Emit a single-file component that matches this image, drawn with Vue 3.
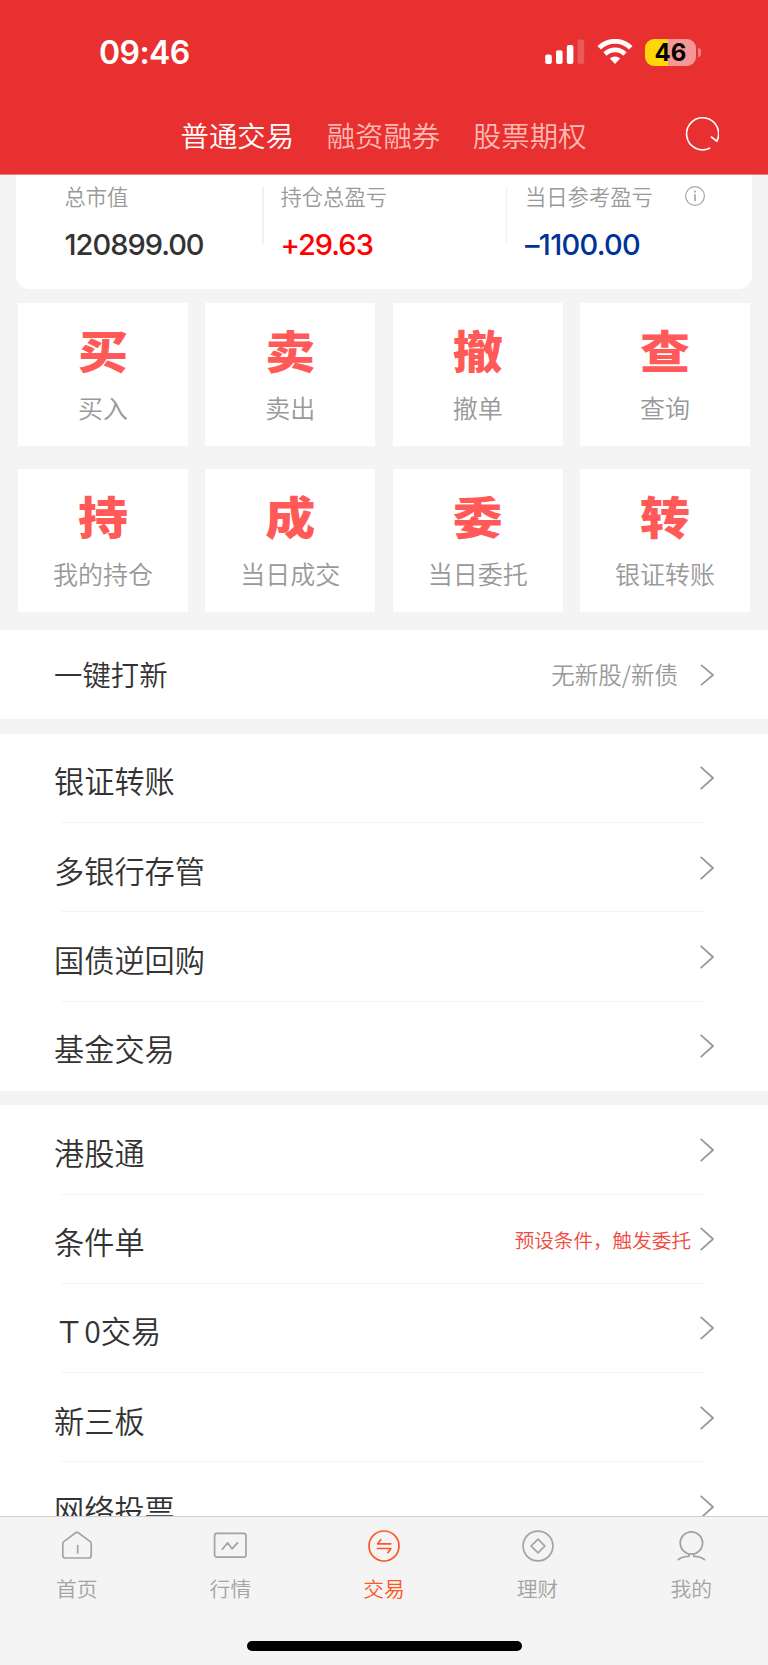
<script setup>
import { ref } from "vue"

const accounts = ["普通交易", "融资融券", "股票期权"]
const activeAccount = ref(0)

const actions = [
    { mark: "买", label: "买入" },
    { mark: "卖", label: "卖出" },
    { mark: "撤", label: "撤单" },
    { mark: "查", label: "查询" },
    { mark: "持", label: "我的持仓" },
    { mark: "成", label: "当日成交" },
    { mark: "委", label: "当日委托" },
    { mark: "转", label: "银证转账" }
]

const groups = [
    [
        { title: "银证转账" },
        { title: "多银行存管" },
        { title: "国债逆回购" },
        { title: "基金交易" }
    ],
    [
        { title: "港股通" },
        { title: "条件单", hint: "预设条件，触发委托" },
        { title: "Ｔ0交易" },
        { title: "新三板" },
        { title: "网络投票" }
    ]
]

const tabs = [
    { id: "home", label: "首页" },
    { id: "market", label: "行情" },
    { id: "trade", label: "交易" },
    { id: "wealth", label: "理财" },
    { id: "mine", label: "我的" }
]
const activeTab = ref("trade")
</script>

<template>
    <div class="page">

        <!-- HEADER -->
        <header class="header">
            <div class="status">
                <span class="time">09:46</span>
                <div class="status-icons">
                    <svg class="signal" width="40" height="26" viewBox="0 0 40 26" fill="#fff">
                        <rect x="0.2" y="15.5" width="6.6" height="9.5" rx="2" />
                        <rect x="11" y="11.2" width="6.6" height="13.8" rx="2" />
                        <rect x="21.8" y="6" width="6.6" height="19" rx="2" />
                        <rect x="32.6" y="0.6" width="6.6" height="24.4" rx="2" opacity=".2" />
                    </svg>
                    <svg class="wifi" width="36" height="26" viewBox="0 0 36 26" fill="none" stroke="#fff">
                        <path d="M2.2 8.8 A22.6 22.6 0 0 1 33.8 8.8" stroke-width="5" />
                        <path d="M8 15 A14.2 14.2 0 0 1 28 15" stroke-width="4.6" />
                        <path d="M12.8 19.6 A7.6 7.6 0 0 1 23.2 19.6 L18 25 Z" fill="#fff" stroke="none" />
                    </svg>
                    <div class="battery"><span>46</span></div>
                    <i class="battery-cap"></i>
                </div>
            </div>
            <nav class="accounts">
                <span v-for="(name, i) in accounts" :key="name" :class="{ active: i === activeAccount }"
                    @click="activeAccount = i">{{ name }}</span>
                <svg class="refresh" width="36" height="36" viewBox="0 0 36 36" fill="none" stroke="#fff"
                    stroke-width="1.6" stroke-linecap="round" stroke-linejoin="round">
                    <path d="M26.6 31.2 A16 16 0 1 1 33.8 24.2" />
                    <path d="M28.4 20 L33.8 24.2" />
                </svg>
            </nav>
        </header>

        <main class="content">

            <!-- ASSETS -->
            <section class="assets">
                <div class="asset">
                    <p>总市值</p>
                    <b>120899.00</b>
                </div>
                <div class="asset">
                    <p>持仓总盈亏</p>
                    <b class="up">+29.63</b>
                </div>
                <div class="asset">
                    <p>
                        当日参考盈亏
                        <svg class="info" width="22" height="22" viewBox="0 0 22 22" fill="none" stroke="#a6a6a6">
                            <circle cx="11" cy="11" r="9.4" stroke-width="1.2" />
                            <path d="M11 9.2V16.2" stroke-width="1.7" />
                            <path d="M11 5.6V7.4" stroke-width="1.7" />
                        </svg>
                    </p>
                    <b class="down">–1100.00</b>
                </div>
            </section>

            <!-- QUICK ACTIONS -->
            <section class="actions">
                <div v-for="item in actions" :key="item.mark" class="action">
                    <span class="mark">{{ item.mark }}</span>
                    <span class="label">{{ item.label }}</span>
                </div>
            </section>

            <!-- NEW SHARES -->
            <section class="group ipo">
                <div class="row">
                    <span class="title">一键打新</span>
                    <span class="note">无新股/新债</span>
                    <svg class="arrow" width="14" height="24" viewBox="0 0 14 24">
                        <path d="M1.6 2.4 L13 12 L1.6 21.6" />
                    </svg>
                </div>
            </section>

            <!-- MENU -->
            <section v-for="(group, g) in groups" :key="g" class="group">
                <div v-for="item in group" :key="item.title" class="row">
                    <span class="title">{{ item.title }}</span>
                    <span v-if="item.hint" class="hint">{{ item.hint }}</span>
                    <svg class="arrow" width="14" height="24" viewBox="0 0 14 24">
                        <path d="M1.2 1.4 L13 12 L1.2 22.6" />
                    </svg>
                </div>
            </section>

        </main>

        <!-- TAB BAR -->
        <footer class="tabbar">
            <div class="tabs">
                <div v-for="tab in tabs" :key="tab.id" class="tab" :class="{ active: tab.id === activeTab }"
                    @click="activeTab = tab.id">
                    <svg width="36" height="36" viewBox="0 0 36 36" fill="none" stroke="currentColor"
                        stroke-width="1.7" stroke-linejoin="round">
                        <template v-if="tab.id === 'home'">
                            <path d="M17 4.5 Q18 3.8 19 4.5 L31.2 13.6 Q32.2 14.4 32.2 15.6 V27.4 Q32.2 30 29.6 30 H6.4 Q3.8 30 3.8 27.4 V15.6 Q3.8 14.4 4.8 13.6 Z" />
                            <path d="M18.7 16.8V25.6" />
                        </template>
                        <template v-else-if="tab.id === 'market'">
                            <rect x="2.6" y="5.4" width="31.4" height="23.8" rx="2.4" />
                            <path d="M10 21.8 L15.6 14.8 L20 20.8 L26 14.4" />
                        </template>
                        <template v-else-if="tab.id === 'trade'">
                            <circle cx="18" cy="18" r="15" />
                            <path d="M25.4 15.8H11.6L15.2 11.2" />
                            <path d="M10.8 20.5H24.8L21.6 25.2" />
                        </template>
                        <template v-else-if="tab.id === 'wealth'">
                            <circle cx="18" cy="18" r="14.9" />
                            <path d="M18 11.2 L24.8 18 L18 24.8 L11.2 18 Z" stroke-linejoin="miter" />
                        </template>
                        <template v-else>
                            <circle cx="18.4" cy="15" r="11.2" />
                            <path d="M4.8 32 Q8.8 28.4 16 28.4 V26" />
                            <path d="M32 32 Q28 28.4 20.8 28.4 V26" />
                        </template>
                    </svg>
                    <span>{{ tab.label }}</span>
                </div>
            </div>
            <div class="home-bar"></div>
        </footer>

    </div>
</template>

<style>
body {
    margin: 0;
    background: #f4f4f4;
}
</style>

<style scoped>
.page {
    display: flex;
    flex-direction: column;
    width: 768px;
    height: 1665px;
    overflow: hidden;
    background: #f4f4f4;
    color: #333;
    font-family: "Noto Sans CJK SC", sans-serif;
    font-weight: 350;
}

.header {
    flex: none;
    height: 174px;
    background: #e93030;
    border-bottom: 1px solid #f08080;
    color: #fff;
}

.status {
    display: flex;
    justify-content: space-between;
    align-items: center;
    height: 104px;
    padding: 0 67px 0 99px;
}

.time {
    font-family: Inter, sans-serif;
    font-size: 32px;
    font-weight: 600;
    letter-spacing: -.6px;
}

.status-icons {
    display: flex;
    align-items: center;
}

.wifi {
    margin: 0 12px;
}

.battery {
    width: 51px;
    height: 27px;
    border-radius: 9px;
    background: linear-gradient(90deg, #ffd60a 46%, #f69797 46%);
    color: #000;
    font: 700 24px/27px Inter, sans-serif;
    text-align: center;
}

.battery-cap {
    width: 3px;
    height: 9px;
    margin-left: 2px;
    border-radius: 0 4px 4px 0;
    background: #f28080;
}

.accounts {
    display: flex;
    align-items: center;
    gap: 32.6px;
    height: 60px;
    padding: 0 49px 0 180.5px;
    font-size: 28.4px;
    color: #fcb9b3;
}

.accounts .active {
    color: #fff;
}

.refresh {
    margin: 2px 0 0 auto;
}

.content {
    flex: 1;
    min-height: 0;
    overflow: hidden;
}

.assets {
    display: grid;
    grid-template-columns: 245.5px 244.5px 1fr;
    height: 114px;
    margin: 0 16px;
    border-radius: 0 0 14px 14px;
    background: #fff;
}

.asset {
    height: 57px;
    margin-top: 12px;
    padding-left: 18px;
    border-left: 1px solid #f1f1f1;
}

.asset:first-child {
    padding-left: 48.5px;
    border-left: none;
}

.asset:nth-child(2) {
    border-left-width: 2px;
    padding-left: 17px;
}

.asset p {
    display: flex;
    align-items: center;
    height: 20px;
    margin: -1px 0 0;
    font-size: 21.3px;
    line-height: 20px;
    color: #999;
    white-space: nowrap;
}

.info {
    margin-left: 31px;
}

.asset b {
    display: block;
    margin-top: 22px;
    font: 500 29px/34px Inter, sans-serif;
    letter-spacing: -1px;
}

.asset .up {
    color: #f00;
}

.asset .down {
    color: #003399;
    letter-spacing: -.7px;
}

.actions {
    display: grid;
    grid-template-columns: repeat(4, 1fr);
    gap: 23px 17.4px;
    padding: 14px 18px 18px;
}

.action {
    display: flex;
    flex-direction: column;
    align-items: center;
    height: 143px;
    background: #fff;
}

.mark {
    height: 60px;
    margin-top: 16px;
    font-size: 50px;
    font-weight: 900;
    line-height: 60px;
    color: #ff5a58;
    transform: scaleY(.9);
}

.label {
    margin-top: 10px;
    font-size: 25px;
    line-height: 36px;
    color: #999;
}

.group {
    margin-bottom: 14.5px;
    background: #fff;
}

.row {
    display: flex;
    align-items: center;
    height: 89.25px;
    padding: 0 54px;
    background: linear-gradient(#f4f4f4, #f4f4f4) 61px 100% / 643px 1px no-repeat;
}

.row:last-child {
    background: none;
}

.title {
    flex: 1;
    padding-top: 4px;
    font-size: 30.2px;
}

.ipo .title {
    padding-top: 0;
    margin-top: -2px;
    font-size: 28.4px;
}

.note {
    margin: -2px 22px 0 0;
    font-size: 23.5px;
    color: #999;
}

.hint {
    margin-right: 9px;
    font-size: 19.6px;
    color: #f04a3e;
}

.arrow {
    flex: none;
    fill: none;
    stroke: #999;
    stroke-width: 1.8;
    stroke-linecap: round;
    stroke-linejoin: round;
}

.tabbar {
    flex: none;
    height: 148px;
    border-top: 1px solid #cfcfcf;
    background: #f4f4f4;
}

.tabs {
    display: grid;
    grid-template-columns: repeat(5, 1fr);
    height: 124px;
}

.tab {
    display: flex;
    flex-direction: column;
    align-items: center;
    padding-top: 11px;
    color: #a3a3a3;
}

.tab span {
    margin-top: 8px;
    font-size: 20.8px;
    line-height: 32px;
}

.tab.active {
    color: #ff5722;
}

.home-bar {
    width: 275px;
    height: 10px;
    margin: 0 auto;
    border-radius: 5px;
    background: #000;
}
</style>
